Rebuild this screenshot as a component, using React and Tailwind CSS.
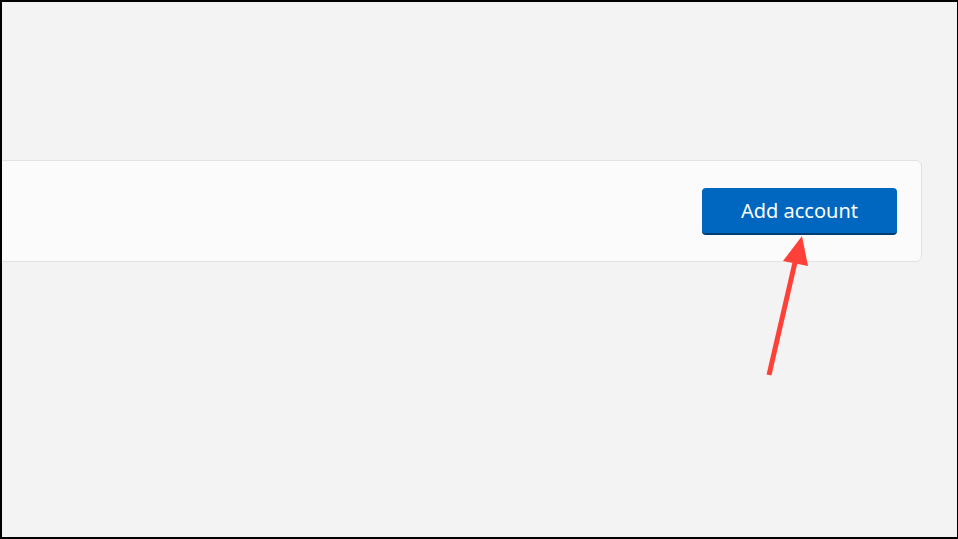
export default function App() {
  return (
    <div className="relative w-[958px] h-[539px] overflow-hidden bg-[#f3f3f3] border-t-2 border-l-2 border-b-2 border-r border-black font-['Noto_Sans','Open_Sans',sans-serif]">
      <div className="pt-[158px] pr-[35px] -ml-[20px]">
        <div className="h-[102px] flex items-center justify-end pr-[24px] bg-[#fbfbfb] border border-[#e2e2e2] rounded-[6px]">
          <button className="w-[195px] h-[47px] rounded-[4px] bg-[#0067c0] border-b-2 border-[#003e73] text-white text-[20px] leading-none pt-[2px]">
            Add account
          </button>
        </div>
      </div>

      <svg className="absolute left-0 top-0" width="958" height="539" viewBox="2 2 958 539">
        <line x1="769" y1="375" x2="796" y2="258" stroke="#fe4138" strokeWidth="5" strokeLinecap="butt" />
        <polygon points="802,236 783,261 808,266" fill="#fe4138" />
      </svg>
    </div>
  );
}
